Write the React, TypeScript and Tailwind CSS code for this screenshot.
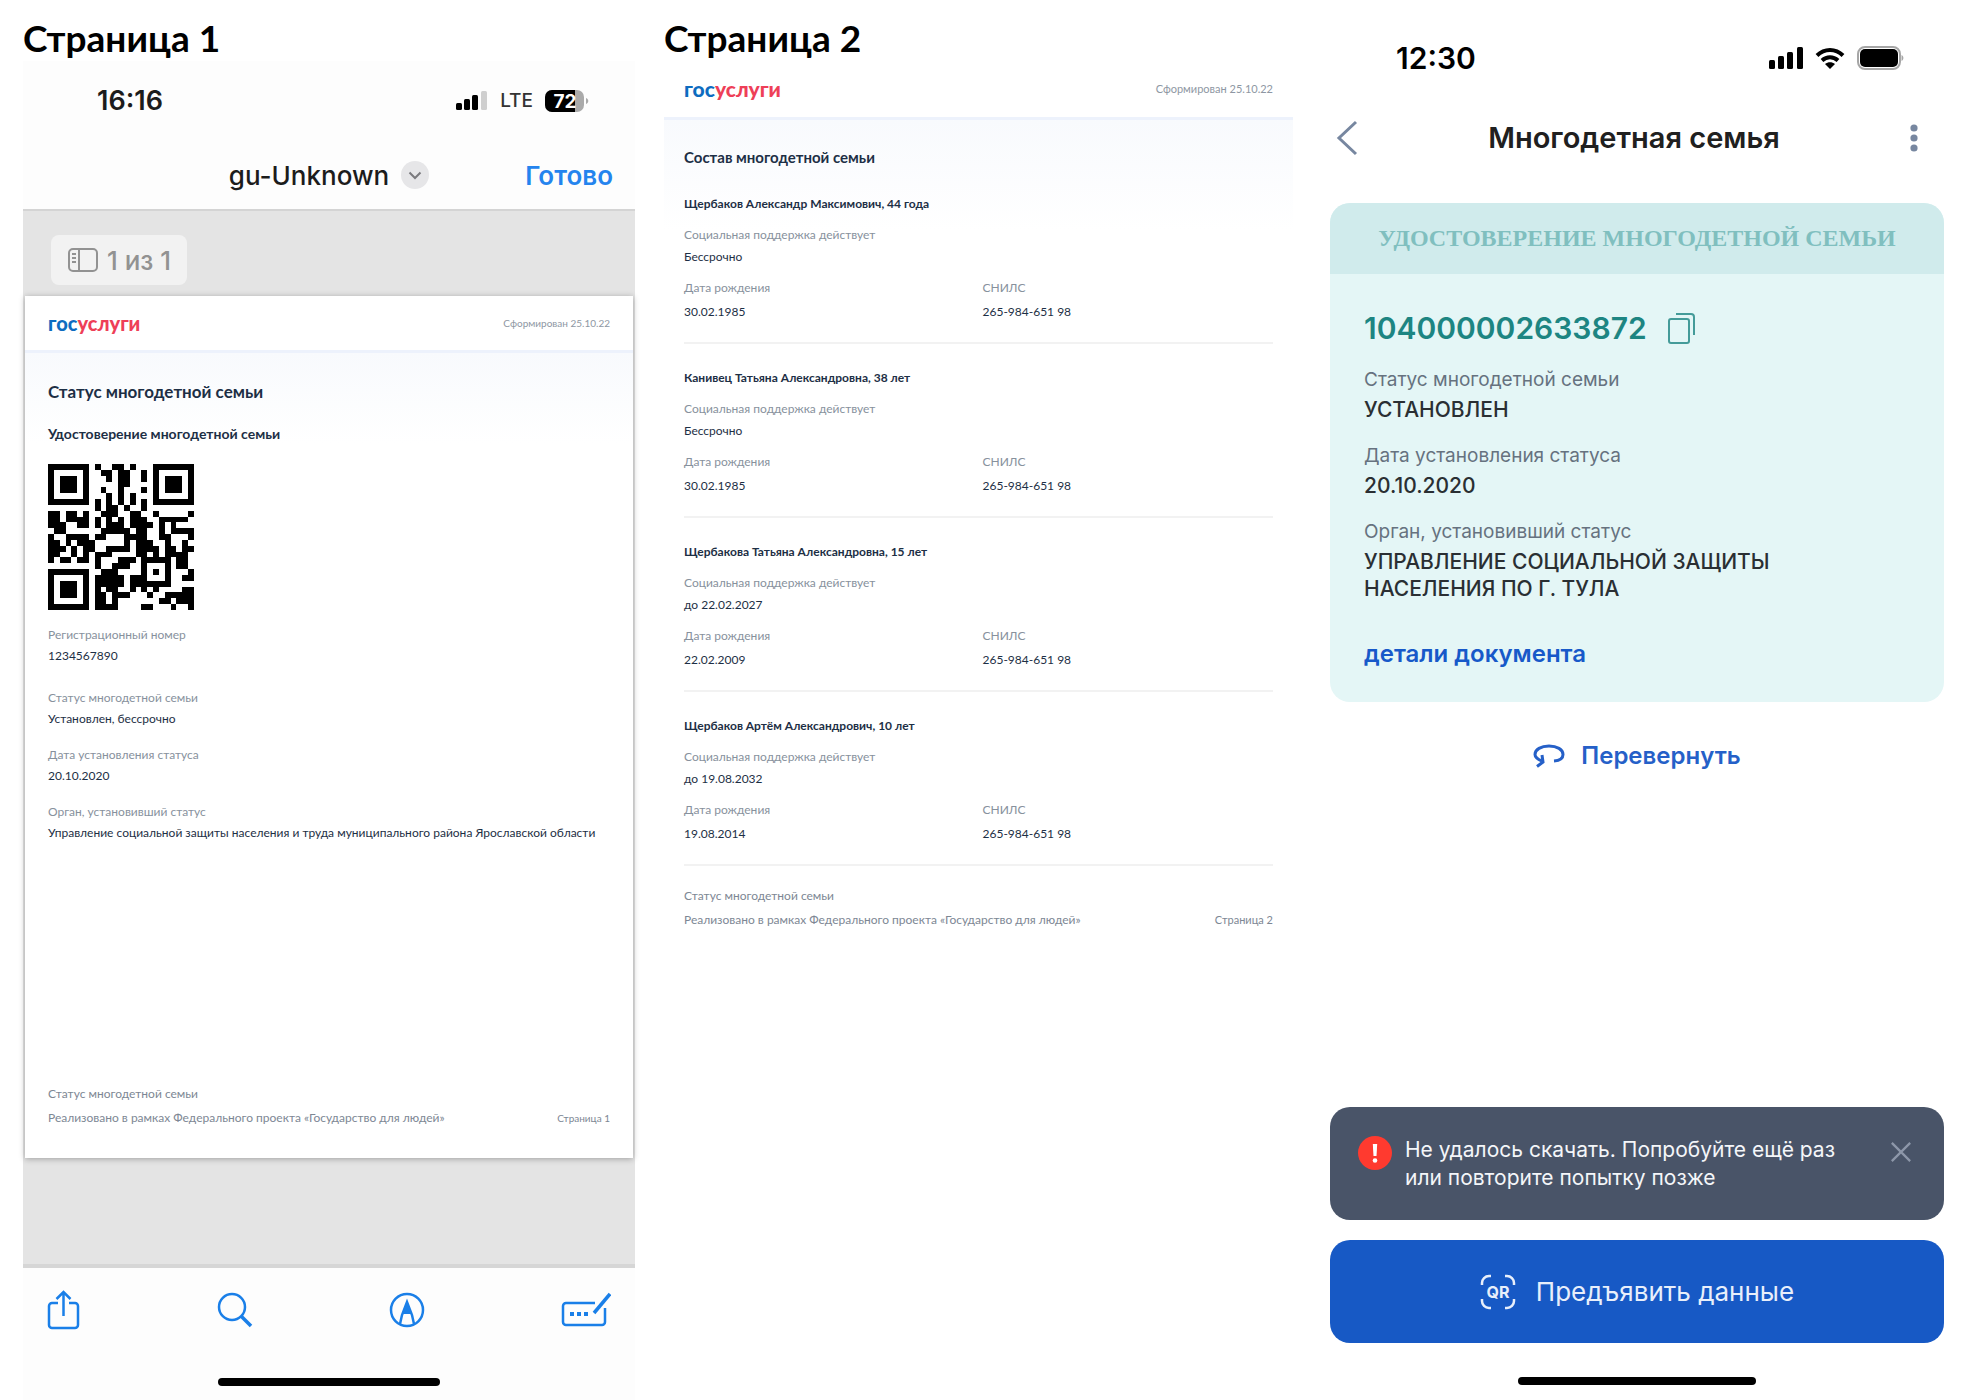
import { ReactNode } from "react";

type Field = { label: string; value: string };

type Member = {
  name: string;
  support: string;
  birthDate: string;
  snils: string;
};

const statusFields: Field[] = [
  { label: "Статус многодетной семьи", value: "Установлен, бессрочно" },
  { label: "Дата установления статуса", value: "20.10.2020" },
  {
    label: "Орган, установивший статус",
    value:
      "Управление социальной защиты населения и труда муниципального района Ярославской области",
  },
];

const members: Member[] = [
  {
    name: "Щербаков Александр Максимович, 44 года",
    support: "Бессрочно",
    birthDate: "30.02.1985",
    snils: "265-984-651 98",
  },
  {
    name: "Канивец Татьяна Александровна, 38 лет",
    support: "Бессрочно",
    birthDate: "30.02.1985",
    snils: "265-984-651 98",
  },
  {
    name: "Щербакова Татьяна Александровна, 15 лет",
    support: "до 22.02.2027",
    birthDate: "22.02.2009",
    snils: "265-984-651 98",
  },
  {
    name: "Щербаков Артём Александрович, 10 лет",
    support: "до 19.08.2032",
    birthDate: "19.08.2014",
    snils: "265-984-651 98",
  },
];

const cardFields: Field[] = [
  { label: "Статус многодетной семьи", value: "УСТАНОВЛЕН" },
  { label: "Дата установления статуса", value: "20.10.2020" },
  {
    label: "Орган, установивший статус",
    value: "УПРАВЛЕНИЕ СОЦИАЛЬНОЙ ЗАЩИТЫ НАСЕЛЕНИЯ ПО Г. ТУЛА",
  },
];

const qrRows = [
  "#######.#..##.#...#######",
  "#.....#..##.##..#.#.....#",
  "#.###.#...#.##..#.#.###.#",
  "#.###.#.....##....#.###.#",
  "#.###.#..#..#...#.#.###.#",
  "#.....#...#.#.#...#.....#",
  "#######.#.#.#.#.#.#######",
  "........#.##.#..#........",
  "##.##.#..###..##..#.....#",
  "##.####.#.#.#.###..#####.",
  "###..##.#.###.####.#.#...",
  ".##......#####.##..#.####",
  "#..####.##...####..##...#",
  "##.#.###.....#.###..#..#.",
  "###.#.##..####.####.##.##",
  "##..#.#.###....##.#.####.",
  "#.##.##.#...###.#####.##.",
  "........#..###..#...#.##.",
  "#######..###....#.#.#...#",
  "#.....#.#####.###...#..##",
  "#.###.#.#####.#######....",
  "#.###.#.#.##..#.#.#....##",
  "#.###.#.##.###...#..#####",
  "#.....#.##.#.......##.###",
  "#######.####....##...#..#",
];

const QrCode = () => (
  <svg
    viewBox="0 0 25 25"
    className="size-[146px]"
    shapeRendering="crispEdges"
    role="img"
    aria-label="QR-код удостоверения"
  >
    {qrRows.map((row, y) =>
      row
        .split("")
        .map((cell, x) =>
          cell === "#" ? (
            <rect key={`${x}-${y}`} x={x} y={y} width="1" height="1" />
          ) : null,
        ),
    )}
  </svg>
);

const HomeIndicator = ({ className }: { className: string }) => (
  <div className={`mx-auto h-2 rounded-full bg-black ${className}`} />
);

const DocumentHeader = ({ logoSize, dateSize }: { logoSize: string; dateSize: string }) => (
  <header className="flex items-center justify-between">
    <span className={`leading-6 font-black text-[#0d6cc0] ${logoSize}`}>
      гос<span className="text-[#ee3f58]">услуги</span>
    </span>
    <span className={`text-[#8e97a3] ${dateSize}`}>Сформирован 25.10.22</span>
  </header>
);

const DocumentFooter = ({ page, pageSize }: { page: number; pageSize: string }) => (
  <footer className="text-xs leading-6 text-[#7d8794]">
    <p>Статус многодетной семьи</p>
    <div className="flex items-center justify-between">
      <p>Реализовано в рамках Федерального проекта «Государство для людей»</p>
      <p className={pageSize}>Страница {page}</p>
    </div>
  </footer>
);

const DocumentField = ({ label, value }: Field) => (
  <div className="text-xs leading-[21px]">
    <dt className="text-[#87919d]">{label}</dt>
    <dd className="text-[#1d2f45]">{value}</dd>
  </div>
);

const ToolButton = ({ label, children }: { label: string; children: ReactNode }) => (
  <button type="button" aria-label={label} className="cursor-pointer text-[#1a7fe8]">
    {children}
  </button>
);

const FirstPage = () => (
  <section className="flex flex-col">
    <h1 className="pt-[15px] text-[37px] leading-[46px] font-bold">Страница 1</h1>

    <div className="flex flex-1 flex-col bg-[#fdfdfd]">
      {/* Status bar */}
      <div className="flex h-20 items-center justify-between pr-[46px] pl-[74px] font-['Inter',sans-serif]">
        <span className="text-[27px] font-semibold text-[#1c1c1c]">16:16</span>
        <div className="flex items-center gap-3">
          <svg width="32" height="20" viewBox="0 0 32 20" aria-hidden="true">
            <rect x="0" y="12" width="6" height="7" rx="1.5" />
            <rect x="8" y="8" width="6" height="11" rx="1.5" />
            <rect x="16" y="4" width="6" height="15" rx="1.5" />
            <rect x="25" y="0" width="6" height="19" rx="1.5" fill="#cfcfcf" />
          </svg>
          <span className="text-[19px] font-medium text-[#333]">LTE</span>
          <svg width="44" height="24" viewBox="0 0 44 24" role="img" aria-label="72%">
            <rect x="0" y="1" width="39" height="22" rx="7" fill="#aaa" />
            <path d="M7 1h23v22H7a7 7 0 0 1-7-7V8a7 7 0 0 1 7-7z" />
            <path d="M41 9v6c3-1 3-5 0-6z" fill="#aaa" />
            <text
              x="20"
              y="19"
              textAnchor="middle"
              fill="#fff"
              fontSize="19"
              fontWeight="700"
              fontFamily="Inter, sans-serif"
            >
              72
            </text>
          </svg>
        </div>
      </div>

      {/* Title bar */}
      <div className="grid h-[70px] grid-cols-[1fr_auto_1fr] items-center border-b-2 border-[#d4d4d4] font-['Inter',sans-serif] text-[26px]">
        <span />
        <button
          type="button"
          className="flex cursor-pointer items-center gap-3 font-medium text-[#1c1c1c]"
        >
          gu-Unknown
          <span className="flex size-7 items-center justify-center rounded-full bg-[#e6e6e8]">
            <svg width="14" height="9" viewBox="0 0 14 9" fill="none" aria-hidden="true">
              <path d="M1.500 1.500l5.500 5.500 5.500-5.500" stroke="#7a7a7e" strokeWidth="2" />
            </svg>
          </span>
        </button>
        <button
          type="button"
          className="cursor-pointer justify-self-end pr-[22px] font-semibold text-[#2484ee]"
        >
          Готово
        </button>
      </div>

      {/* Viewer */}
      <div className="flex-1 border-b-4 border-[#d6d6d6] bg-[#e4e4e4] px-[2px] pt-6">
        <div className="ml-[26px] flex h-[50px] w-fit items-center gap-2 rounded-lg bg-[#f2f2f2] px-4 font-['Inter',sans-serif] text-[26px] font-medium text-[#929292]">
          <svg
            width="32"
            height="26"
            viewBox="0 0 32 26"
            fill="none"
            stroke="currentColor"
            strokeWidth="2"
            aria-hidden="true"
          >
            <rect x="2" y="2" width="28" height="22" rx="4" />
            <path d="M12 2v22" />
            <path d="M5 7h4M5 11h4M5 15h4" />
          </svg>
          1 из 1
        </div>

        <article className="mt-[11px] flex min-h-[862px] flex-col bg-white shadow-[0_1px_6px_rgba(0,0,0,0.3)]">
          <div className="px-[23px] pt-[15px] pb-[15px]">
            <DocumentHeader logoSize="text-xl" dateSize="text-[10px]" />
          </div>
          <div className="flex flex-1 flex-col border-t-[3px] border-[#edf2fc] bg-[linear-gradient(#f8fafd,#fff_90px)] px-[23px] pt-[27px] pb-7">
            <h2 className="text-[17px] leading-6 font-bold text-[#1d2f45]">
              Статус многодетной семьи
            </h2>
            <h3 className="mt-5 text-sm leading-5 font-bold text-[#1d2f45]">
              Удостоверение многодетной семьи
            </h3>
            <div className="mt-5">
              <QrCode />
            </div>
            <dl className="mt-[14px]">
              <DocumentField label="Регистрационный номер" value="1234567890" />
            </dl>
            <dl className="mt-[21px] flex flex-col gap-[15px]">
              {statusFields.map((field) => (
                <DocumentField key={field.label} {...field} />
              ))}
            </dl>
            <div className="mt-auto">
              <DocumentFooter page={1} pageSize="text-[10px]" />
            </div>
          </div>
        </article>
      </div>

      {/* Toolbar */}
      <div className="flex items-center justify-between px-6 pt-[22px]">
        <ToolButton label="Поделиться">
          <svg width="34" height="40" viewBox="0 0 34 40" fill="none" stroke="currentColor" strokeWidth="2.500">
            <path d="M11 13H5a3 3 0 0 0-3 3v19a3 3 0 0 0 3 3h23a3 3 0 0 0 3-3V16a3 3 0 0 0-3-3h-6" />
            <path d="M16.500 26V2M9.500 9l7-7 7 7" />
          </svg>
        </ToolButton>
        <ToolButton label="Найти">
          <svg width="36" height="36" viewBox="0 0 36 36" fill="none" stroke="currentColor" strokeWidth="2.500">
            <circle cx="15" cy="15" r="13" />
            <path d="M24 24l10 10" strokeWidth="3.500" />
          </svg>
        </ToolButton>
        <ToolButton label="Разметка">
          <svg width="36" height="36" viewBox="0 0 36 36" fill="none" stroke="currentColor" strokeWidth="2.500">
            <circle cx="18" cy="18" r="16" />
            <path d="M11 32l2-9 5-13 5 13 2 9" />
            <path d="M13.500 22L18 9l4.500 13z" fill="currentColor" stroke="none" />
          </svg>
        </ToolButton>
        <ToolButton label="Заполнить форму">
          <svg width="50" height="36" viewBox="0 0 50 36" fill="none" stroke="currentColor" strokeWidth="2.500">
            <path d="M34 11H5a3 3 0 0 0-3 3v16a3 3 0 0 0 3 3h36a3 3 0 0 0 3-3V16" />
            <path d="M33 21L49 2" strokeWidth="3.500" />
            <path d="M9 22h18" strokeWidth="4" strokeDasharray="4 3" />
          </svg>
        </ToolButton>
      </div>
      <HomeIndicator className="mt-12 mb-[14px] w-[222px]" />
    </div>
  </section>
);

const SecondPage = () => (
  <section>
    <h1 className="pt-[15px] text-[37px] leading-[46px] font-bold">Страница 2</h1>

    <article>
      <div className="px-5 pt-4 pb-4">
        <DocumentHeader logoSize="text-[21px]" dateSize="text-[11px]" />
      </div>
      <div className="border-t-[3px] border-[#edf2fc] bg-[linear-gradient(#f8fafd,#fff_110px)] px-5 pt-[25px]">
        <h2 className="text-[15px] leading-6 font-bold text-[#1d2f45]">
          Состав многодетной семьи
        </h2>
        <ul className="flex flex-col gap-[23px] pt-6">
          {members.map((member) => (
            <li
              key={member.name}
              className="border-b-2 border-[#f2f2f2] pb-[18px] text-xs leading-[22px]"
            >
              <h3 className="font-bold text-[#1d2f45]">{member.name}</h3>
              <dl className="mt-[9px]">
                <dt className="text-[#87919d]">Социальная поддержка действует</dt>
                <dd className="text-[#1d2f45]">{member.support}</dd>
              </dl>
              <dl className="mt-2 grid grid-cols-2 gap-x-2 leading-6">
                <div>
                  <dt className="text-[#87919d]">Дата рождения</dt>
                  <dd className="text-[#1d2f45]">{member.birthDate}</dd>
                </div>
                <div>
                  <dt className="text-[#87919d]">СНИЛС</dt>
                  <dd className="text-[#1d2f45]">{member.snils}</dd>
                </div>
              </dl>
            </li>
          ))}
        </ul>
        <div className="pt-[18px]">
          <DocumentFooter page={2} pageSize="text-[11px]" />
        </div>
      </div>
    </article>
  </section>
);

const CertificateScreen = () => (
  <section className="flex flex-col pl-2 font-['Inter',sans-serif]">
    {/* Status bar */}
    <div className="flex items-center justify-between pt-10 pr-10 pl-[66px]">
      <span className="text-3xl leading-9 font-semibold">12:30</span>
      <div className="flex items-center gap-3">
        <svg width="34" height="22" viewBox="0 0 34 22" aria-hidden="true">
          <rect x="0" y="13" width="6" height="9" rx="1.500" />
          <rect x="9" y="9" width="6" height="13" rx="1.500" />
          <rect x="18" y="5" width="6" height="17" rx="1.500" />
          <rect x="28" y="0" width="6" height="22" rx="1.500" />
        </svg>
        <svg width="30" height="22" viewBox="0 0 30 22" fill="none" stroke="#000" strokeWidth="4" aria-hidden="true">
          <path d="M2 8.500c7.500-7.300 18.500-7.300 26 0" />
          <path d="M7 13.500c4.800-4.300 11.200-4.300 16 0" />
          <path d="M15 22l-5-5c3-2.500 7-2.500 10 0z" fill="#000" stroke="none" />
        </svg>
        <svg width="47" height="24" viewBox="0 0 47 24" aria-hidden="true">
          <rect x="1" y="1" width="42" height="22" rx="7" fill="none" stroke="#a6a6a6" strokeWidth="2" />
          <rect x="3" y="3" width="38" height="18" rx="5" />
          <path d="M44.500 9v6c2.500-1 2.500-5 0-6z" fill="#a6a6a6" />
        </svg>
      </div>
    </div>

    {/* Navigation */}
    <div className="mt-11 flex items-center justify-between pr-[26px] pl-[6px] text-[#7787a0]">
      <button type="button" aria-label="Назад" className="cursor-pointer">
        <svg width="22" height="36" viewBox="0 0 22 36" fill="none" stroke="currentColor" strokeWidth="3">
          <path d="M20 2L3 18l17 16" />
        </svg>
      </button>
      <h1 className="text-[29px] leading-9 font-semibold text-[#202020]">
        Многодетная семья
      </h1>
      <button type="button" aria-label="Ещё" className="cursor-pointer">
        <svg width="8" height="28" viewBox="0 0 8 28" fill="currentColor">
          <circle cx="4" cy="4" r="3.600" />
          <circle cx="4" cy="14" r="3.600" />
          <circle cx="4" cy="24" r="3.600" />
        </svg>
      </button>
    </div>

    {/* Certificate card */}
    <article className="mt-[47px] overflow-hidden rounded-[20px] bg-[#e4f6f6]">
      <h2 className="bg-[#d0ebec] pt-[19px] pb-5 text-center font-['Liberation_Serif',serif] text-2xl leading-8 font-bold text-[#80bfbf]">
        УДОСТОВЕРЕНИЕ МНОГОДЕТНОЙ СЕМЬИ
      </h2>
      <div className="px-[34px] pt-9 pb-8">
        <div className="flex items-center gap-5 text-[#1d8582]">
          <span className="text-3xl leading-9 font-semibold">104000002633872</span>
          <button type="button" aria-label="Скопировать номер" className="cursor-pointer">
            <svg width="30" height="34" viewBox="0 0 30 34" fill="none" stroke="currentColor" strokeWidth="2" className="opacity-80">
              <rect x="2" y="8" width="20" height="24" rx="2" />
              <path d="M9 3h15a3 3 0 0 1 3 3v18" />
            </svg>
          </button>
        </div>
        <dl className="mt-[18px] flex flex-col gap-[17px]">
          {cardFields.map((field) => (
            <div key={field.label} className="max-w-[440px]">
              <dt className="text-[19px] leading-8 text-[#66727f]">{field.label}</dt>
              <dd className="text-[21px] leading-[27px] font-medium text-[#2a2f33]">
                {field.value}
              </dd>
            </div>
          ))}
        </dl>
        <a
          href="#details"
          className="mt-9 inline-block text-2xl leading-8 font-semibold text-[#1759c9]"
        >
          детали документа
        </a>
      </div>
    </article>

    <button
      type="button"
      className="mx-auto mt-[38px] flex cursor-pointer items-center gap-4 text-2xl leading-8 font-semibold text-[#2560c8]"
    >
      <svg width="32" height="26" viewBox="0 0 32 26" fill="none" stroke="currentColor" strokeWidth="3" aria-hidden="true">
        <path d="M9 18C4 16 2 14 2 11.500C2 6.500 8 3 16 3s14 3.500 14 8.500c0 3.500-3 6-9 6.500" />
        <path d="M4 23.500l6-4.500-1-7" />
      </svg>
      Перевернуть
    </button>

    <div className="mt-auto">
      <div
        role="alert"
        className="flex items-start gap-[13px] rounded-[20px] bg-[#495468] pt-[29px] pr-8 pb-7 pl-7 text-[#f4f6f9]"
      >
        <svg width="34" height="34" viewBox="0 0 34 34" className="shrink-0" aria-hidden="true">
          <circle cx="17" cy="17" r="17" fill="#ff3a2f" />
          <path d="M14.800 8h4.400l-.7 12h-3z" fill="#fff" />
          <circle cx="17" cy="24.500" r="2.300" fill="#fff" />
        </svg>
        <p className="flex-1 text-[21px] leading-7">
          Не удалось скачать. Попробуйте ещё раз
          <br />
          или повторите попытку позже
        </p>
        <button type="button" aria-label="Закрыть" className="cursor-pointer pt-[5px]">
          <svg width="22" height="22" viewBox="0 0 24 24" stroke="#8d97a9" strokeWidth="2.500">
            <path d="M2 2l20 20M22 2L2 22" />
          </svg>
        </button>
      </div>

      <button
        type="button"
        className="mt-5 flex w-full cursor-pointer items-center justify-center gap-5 rounded-[20px] bg-[#1759c5] pt-[34px] pb-[33px] text-[26px] leading-9 text-[#e8effb]"
      >
        <svg width="36" height="36" viewBox="0 0 36 36" fill="none" stroke="currentColor" strokeWidth="2.500" aria-hidden="true">
          <path d="M2 11V9a7 7 0 0 1 7-7h2M25 2h2a7 7 0 0 1 7 7v2M34 25v2a7 7 0 0 1-7 7h-2M11 34H9a7 7 0 0 1-7-7v-2" />
          <text
            x="18"
            y="24"
            textAnchor="middle"
            fill="currentColor"
            stroke="none"
            fontSize="16"
            fontWeight="700"
            fontFamily="Inter, sans-serif"
          >
            QR
          </text>
        </svg>
        Предъявить данные
      </button>
      <HomeIndicator className="mt-[34px] mb-[15px] w-[238px]" />
    </div>
  </section>
);

export default function App() {
  return (
    <main className="grid min-h-screen grid-cols-[612fr_629fr_622fr] gap-[29px] bg-white pr-6 pl-[23px] font-['Lato',sans-serif] text-black">
      <FirstPage />
      <SecondPage />
      <CertificateScreen />
    </main>
  );
}
